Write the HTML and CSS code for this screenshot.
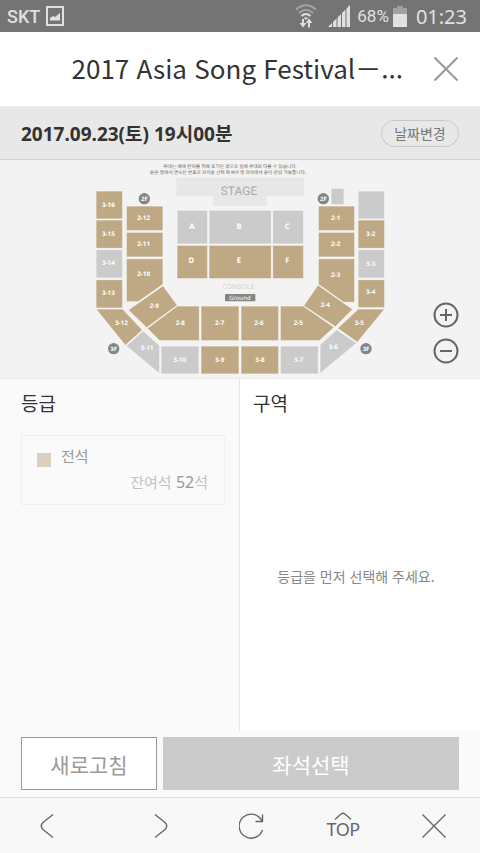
FILE: index.html
```html
<!DOCTYPE html>
<html lang="ko">
<head>
<meta charset="utf-8">
<meta name="viewport" content="width=device-width, initial-scale=1">
<title>2017 Asia Song Festival</title>
<link rel="stylesheet" href="styles.css">
</head>
<body>
<div class="status">
  <span class="carrier">SKT</span>
  <svg class="picture" width="18" height="20" viewBox="0 0 18 20" aria-hidden="true"><rect x="1" y="1" width="16" height="18" fill="none" stroke="currentColor" stroke-width="2"/><path d="M4 14.500V12l3-2 2 1 5-4v7.500z" fill="currentColor"/></svg>
  <svg class="wifi" width="22" height="24" viewBox="0 0 22 24" aria-hidden="true"><g fill="none" stroke="currentColor" stroke-width="2"><path d="M1 5.500Q11-3 21 5.500M4 9Q11 2.500 18 9" opacity=".45"/><path d="M6.500 12Q11 8 15.500 12"/></g><path d="M8.500 13.500h5L11 16zM7 15h2v4h2.500L8 23.500 4.500 19H7zM13 23.500h2V19h2.500L14 14.500 10.800 19H13z" fill="currentColor"/></svg>
  <svg class="signal" width="22" height="22" viewBox="0 0 22 22" aria-hidden="true"><path d="M0 22l4-4v4zM5 17l3.500-3.500V22H5zM9.500 12.500L13 9v13H9.500zM14 8l3.500-3.500V22H14zM18.500 3.500L22 0v22h-3.500z" fill="currentColor"/></svg>
  <span class="percent">68%</span>
  <svg class="battery" width="14" height="21" viewBox="0 0 14 21" aria-hidden="true"><path d="M4 0h6v2h4v6H0V2h4z" fill="#a2a2a2"/><path d="M0 8h14v13H0z" fill="currentColor"/></svg>
  <span class="clock">01:23</span>
</div>

<header class="header">
  <h1 class="title">2017 Asia Song Festival－...</h1>
  <button class="close" type="button" aria-label="닫기"><svg width="26" height="26" viewBox="0 0 26 26"><path d="M1.500 1.500l23 23M24.500 1.500l-23 23"/></svg></button>
</header>

<section class="datebar">
  <strong class="date">2017.09.23(토) 19시00분</strong>
  <button class="change" type="button">날짜변경</button>
</section>

<section class="map">
  <svg class="seats" viewBox="0 0 1440 654" role="img" aria-label="좌석 배치도">
    <g class="note">
      <text x="690" y="23">무대는 예매 편의를 위해 표기된 것으로 실제 무대와 다를 수 있습니다.</text>
      <text x="684" y="42">같은 열에서 연속된 번호로 좌석을 선택 하셔야 옆 좌석에서 같이 관람 가능합니다.</text>
    </g>
    <path class="stage" d="M529 53H912V109H800V137H639V109H529z"/>
    <text class="stage-name" x="717" y="105">STAGE</text>
    <g class="open">
      <path d="M288 93h80v84h-80zM288 180h80v85h-80zM288 359h80v85h-80z"/>
      <path d="M288 447H368L427 510 376 556z"/>
      <path d="M379 138h110v74H379zM379 217h110v74H379zM379 296H489V373L415 425H379z"/>
      <path d="M489 377L532 436 440 503 385 450zM532 438H598V542H479L442 505z"/>
      <path d="M603 438h114v104H603zM723 438h113v104H723z"/>
      <path d="M841 438H910L1002 502 958 542H841zM954 375L1058 448 1006 500 911 437z"/>
      <path d="M955 138h109v74H955zM955 217h109v74H955zM955 296H1064V427H1031L955 373z"/>
      <path d="M1074 180h80v85h-80zM1074 359h80v84h-80zM1075 447H1154L1072 547 1013 505z"/>
      <path d="M603 558h114v84H603zM723 558h113v84H723z"/>
      <path d="M531 256h92v100h-92zM627 256h187v100H627zM818 256h93v100h-93z"/>
    </g>
    <g class="closed">
      <path d="M288 269h80v85h-80zM1074 269h80v85h-80zM1074 93h80v84h-80zM993 85h39v49h-39z"/>
      <path d="M429 512L479 557V641L379 558zM483 558h114v84H483zM841 558h114v84H841z"/>
      <path d="M1010 509L1070 549 960 641V555z"/>
      <path d="M531 151h92v101h-92zM627 151h187v101H627zM818 151h93v101h-93z"/>
    </g>
    <g class="zone">
      <text x="325" y="141">3-16</text><text x="325" y="227">3-15</text><text x="325" y="314">3-14</text><text x="325" y="404">3-13</text>
      <text x="364" y="494">3-12</text><text x="441" y="571">3-11</text><text x="539" y="605">3-10</text><text x="659" y="605">3-9</text>
      <text x="780" y="605">3-8</text><text x="896" y="605">3-7</text><text x="1000" y="567">3-6</text><text x="1078" y="495">3-5</text>
      <text x="1112" y="402">3-4</text><text x="1112" y="317">3-3</text><text x="1112" y="229">3-2</text>
      <text x="431" y="179">2-12</text><text x="431" y="257">2-11</text><text x="431" y="349">2-10</text><text x="463" y="443">2-9</text>
      <text x="541" y="496">2-8</text><text x="659" y="496">2-7</text><text x="777" y="496">2-6</text><text x="895" y="496">2-5</text>
      <text x="976" y="440">2-4</text><text x="1007" y="350">2-3</text><text x="1007" y="257">2-2</text><text x="1007" y="179">2-1</text>
    </g>
    <g class="floor">
      <text x="576" y="207">A</text><text x="717" y="207">B</text><text x="862" y="207">C</text>
      <text x="574" y="308">D</text><text x="717" y="308">E</text><text x="862" y="308">F</text>
    </g>
    <text class="console" x="715" y="388">CONSOLE</text>
    <rect class="mark" x="675" y="402" width="91" height="22" rx="2"/>
    <text class="ground" x="720" y="419">Ground</text>
    <g class="mark"><circle cx="433" cy="116" r="17"/><circle cx="970" cy="116" r="17"/><circle cx="341" cy="566" r="17"/><circle cx="1098" cy="566" r="17"/></g>
    <g class="level"><text x="433" y="123">2F</text><text x="970" y="123">2F</text><text x="341" y="573">3F</text><text x="1098" y="573">3F</text></g>
  </svg>
  <div class="zoom">
    <button type="button" aria-label="확대"><svg width="26" height="26" viewBox="0 0 26 26"><circle cx="13" cy="13" r="11.500"/><path d="M7 13h12M13 7v12"/></svg></button>
    <button type="button" aria-label="축소"><svg width="26" height="26" viewBox="0 0 26 26"><circle cx="13" cy="13" r="11.500"/><path d="M7 13h12"/></svg></button>
  </div>
</section>

<main class="panels">
  <section class="grades">
    <h2 class="heading">등급</h2>
    <button class="grade" type="button">
      <span class="swatch"></span>
      <span class="name">전석</span>
      <span class="left">잔여석 <b>52</b>석</span>
    </button>
  </section>
  <section class="areas">
    <h2 class="heading">구역</h2>
    <p class="empty">등급을 먼저 선택해 주세요.</p>
  </section>
</main>

<div class="actions">
  <button class="refresh" type="button">새로고침</button>
  <button class="select" type="button">좌석선택</button>
</div>

<nav class="nav">
  <button class="back" type="button" aria-label="뒤로"><svg width="26" height="26" viewBox="0 0 26 26"><path d="M19 1.500L9 9.500Q5.500 13 9 16.500L19 24.500"/></svg></button>
  <button type="button" aria-label="앞으로"><svg width="26" height="26" viewBox="0 0 26 26"><path d="M7 1.500L17 9.500Q20.500 13 17 16.500L7 24.500"/></svg></button>
  <button type="button" aria-label="새로고침"><svg width="26" height="26" viewBox="0 0 26 26"><path d="M23.500 17A12 12 0 1 1 23 8M23.500 1.500V8.500H16.500"/></svg></button>
  <button class="top" type="button"><svg width="18" height="8" viewBox="0 0 18 8"><path d="M1 7.500L7 2Q9 .5 11 2L17 7.500"/></svg><span>TOP</span></button>
  <button type="button" aria-label="닫기"><svg width="26" height="26" viewBox="0 0 26 26"><path d="M1.500 1.500l23 23M24.500 1.500l-23 23"/></svg></button>
</nav>
</body>
</html>
```
FILE: styles.css
```css
* {
  box-sizing: border-box;
}

body {
  display: flex;
  flex-direction: column;
  min-height: 100vh;
  margin: 0;
  background: #fafafa;
  color: #333;
  font-family: "Noto Sans CJK KR", sans-serif;
}

button {
  margin: 0;
  padding: 0;
  border: 0;
  background: none;
  color: inherit;
  font: inherit;
}

button svg {
  display: block;
  fill: none;
  stroke: currentColor;
}

h1,
h2,
p {
  margin: 0;
  font-weight: 400;
}

.status {
  display: flex;
  align-items: center;
  height: 32px;
  padding: 0 13px 0 7px;
  background: #747474;
  color: #e0e0e0;
  font-family: Roboto, sans-serif;
}

.carrier {
  font-size: 18px;
  font-weight: 500;
}

.picture {
  margin-left: 6px;
}

.wifi {
  margin-left: auto;
}

.signal {
  margin-left: 11px;
}

.percent {
  margin-left: 7px;
  font-size: 17px;
}

.battery {
  margin-left: 4px;
}

.clock {
  margin-left: 9px;
  font-family: "Noto Sans", sans-serif;
  font-size: 20px;
}

.header {
  display: flex;
  align-items: center;
  justify-content: flex-end;
  gap: 30px;
  height: 75px;
  padding-right: 21px;
  border-bottom: 1px solid #eee;
  background: #fff;
}

.title {
  overflow: hidden;
  padding-bottom: 2px;
  font-size: 26px;
  line-height: 40px;
  white-space: nowrap;
}

.close {
  color: #999;
}

.close svg {
  stroke-width: 2;
}

.datebar {
  display: flex;
  align-items: center;
  justify-content: space-between;
  height: 53px;
  padding: 0 21px;
  border-bottom: 1px solid #d0d0d0;
  background: #e8e8e8;
}

.date {
  font-family: "Noto Sans", "Noto Sans CJK KR", sans-serif;
  font-size: 19px;
  font-weight: 700;
}

.change {
  width: 78px;
  height: 27px;
  border: 1px solid #c8c8c8;
  border-radius: 14px;
  color: #777;
  font-size: 14px;
  line-height: 20px;
}

.map {
  position: relative;
  border-bottom: 1px solid #e8e8e8;
  background: #f3f3f3;
}

.seats {
  display: block;
  width: 100%;
  font-family: "Noto Sans", "Noto Sans CJK KR", sans-serif;
  text-anchor: middle;
  text-rendering: geometricPrecision;
}

.note {
  fill: #666;
  font-size: 14px;
}

.stage {
  fill: #e7e7e7;
}

.stage-name {
  fill: #aaa;
  font-family: Roboto, sans-serif;
  font-size: 36px;
}

.open {
  fill: #bea984;
}

.closed {
  fill: #cbcbcb;
}

.open,
.closed {
  stroke: #f9f9f7;
  stroke-width: 2;
}

.zone {
  fill: #fff;
  font-size: 19px;
  font-weight: 700;
}

.floor {
  fill: #fff;
  font-size: 23px;
  font-weight: 700;
}

.console {
  fill: #d8d8d8;
  font-size: 21px;
  font-weight: 500;
}

.mark {
  fill: #858585;
}

.ground {
  fill: #fff;
  font-size: 18px;
}

.level {
  fill: #fff;
  font-size: 18px;
  font-weight: 700;
}

.zoom {
  position: absolute;
  right: 21px;
  bottom: 14px;
  display: grid;
  gap: 10px;
  color: #666;
}

.zoom svg {
  stroke-width: 2;
}

.panels {
  display: grid;
  flex: 1;
  grid-template-columns: 1fr 1fr;
}

.grades {
  padding: 9px 14px 0 21px;
  border-right: 1px solid #e8e8e8;
}

.areas {
  display: flex;
  flex-direction: column;
  padding: 9px 13px 0;
  background: #fff;
}

.heading {
  font-size: 19px;
  line-height: 30px;
}

.grade {
  display: grid;
  grid-template-columns: 14px 1fr;
  gap: 0 10px;
  align-items: center;
  width: 100%;
  margin-top: 17px;
  padding: 7px 16px 9px 15px;
  border: 1px solid #f0f0f0;
  color: #999;
  font-size: 15px;
  line-height: 26px;
  text-align: left;
}

.swatch {
  height: 14px;
  margin-top: 8px;
  background: #dbcfbd;
}

.left {
  grid-column: 1 / -1;
  color: #c2c2c2;
  text-align: right;
}

.left b {
  color: #999;
  font-family: "Noto Sans", sans-serif;
  font-size: 16px;
  font-weight: 400;
}

.empty {
  margin: auto;
  padding: 2px 8px 0 0;
  color: #888;
  font-size: 14px;
  line-height: 20px;
}

.actions {
  display: grid;
  grid-template-columns: 136px 1fr;
  gap: 6px;
  height: 66px;
  padding: 6px 21px 7px;
}

.refresh,
.select {
  font-size: 21px;
}

.refresh {
  border: 1px solid #999;
  background: #fff;
  color: #999;
}

.select {
  background: #cbcbcb;
  color: #fff;
}

.nav {
  display: grid;
  grid-template-columns: 24% repeat(4, 19%);
  height: 56px;
  border-top: 1px solid #dedede;
  background: #f8f8f8;
  color: #666;
}

.nav button {
  display: flex;
  flex-direction: column;
  align-items: center;
  justify-content: center;
}

.nav svg {
  stroke-width: 1.4;
}

.nav .back {
  padding-right: 22px;
}

.nav .top {
  font-family: Lato, sans-serif;
  font-size: 17px;
  line-height: 20px;
}
```
